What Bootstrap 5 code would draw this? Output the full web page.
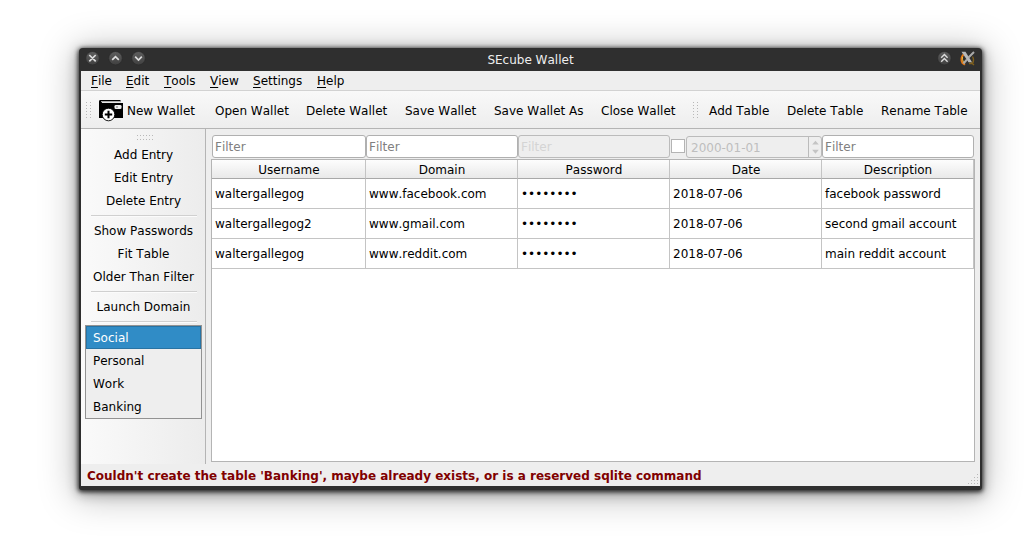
<!DOCTYPE html>
<html lang="en">
<head>
<meta charset="utf-8">
<title>SEcube Wallet</title>
<link rel="stylesheet" href="https://cdn.jsdelivr.net/npm/bootstrap@5.3.0/dist/css/bootstrap.min.css">
<style>
body{background:#fff;font:12px/16px "DejaVu Sans",sans-serif;font-kerning:none;color:#000;height:545px;overflow:hidden;padding:48px 0 0 79px}
.win{width:903px;height:442px;background:#2f2f2f;border-radius:4px 4px 3px 3px;padding:0 2px 4px;box-shadow:0 1px 4px 1px rgba(0,0,0,.75),0 3px 12px 2px rgba(0,0,0,.3),0 4px 36px 4px rgba(0,0,0,.26)}
.titlebar{height:23px;color:#eee;padding:0 5px}
.titlebar svg{display:block;margin-bottom:1px}
.titlebar .cap{padding-right:25px;flex:1;text-align:center}
.inner{height:415px;background:#eee}
.menus{height:20px;border-bottom:1px solid #d2d2d2;padding-left:10px}
.menus span{display:block;line-height:21px}
.menus u{text-underline-offset:2px;text-decoration-thickness:1px}
.tools{height:38px;border-bottom:1px solid #b4b4b4;background:linear-gradient(#f9f9f9,#ededed);line-height:40px;padding-left:4px}
.tools div{flex:none;white-space:nowrap}
.side{width:125px;border-right:1px solid #b4b4b4;background:linear-gradient(90deg,#fafafa,#ececec);padding:5px 3px 0 4px}
.side .act{height:23px;line-height:23px;text-align:center;white-space:nowrap}
.side hr{margin:2px 5px 3px 6px;height:2px;border:0;background:linear-gradient(#d0d0d0 50%,#fbfbfb 50%);opacity:1}
.side hr.last{margin-bottom:2px}
.tabs{border:1px solid #929292;background:#eee}
.tabs .it{height:23px;line-height:24px;padding-left:7px}
.tabs .it.sel{background:#308cc6;color:#fff;box-shadow:inset 0 0 0 1px #2873a3}
.main{padding:6px 5px 2px 5px}
.filters{height:24px;padding-left:1px}
.fl{height:23px;border:1px solid #b0b0b0;border-radius:3px;background:#fff;color:#808080;padding:0 2px;line-height:22px;flex:none}
.fl.off{background:#eee;color:#d4d4d4;border-color:#bbb}
.chk{width:14px;height:14px;border:1px solid #b4b4b4;background:#fff;margin:4px 1px 0;flex:none}
.spin{width:13px;border-left:1px solid #bbb;height:20px}
.view{height:303px;border:1px solid #b4b4b4;background:#fff}
.g{display:grid;grid-template-columns:154px 152px 152px 152px 152px}
.g>div{border-right:1px solid #c4c4c4;border-bottom:1px solid #c4c4c4;height:30px;line-height:30px;padding-left:3px;white-space:nowrap}
.g>.h{height:19px;line-height:20px;text-align:center;padding:0 0 0 1px;background:linear-gradient(#fdfdfd,#e9e9e9);border-bottom-color:#a8a8a8}
.status{height:22px;line-height:24px;padding-left:6px;color:#800000;font-weight:bold;font-kerning:normal}
</style>
<script src="https://cdn.jsdelivr.net/npm/bootstrap@5.3.0/dist/js/bootstrap.bundle.min.js"></script>
</head>
<body>
<svg width="0" height="0" class="position-absolute"><defs>
<linearGradient id="bt" x1="0" y1="0" x2="0" y2="1"><stop offset="0" stop-color="#5e5e5e"/><stop offset="1" stop-color="#404040"/></linearGradient>
<pattern id="dots" width="4" height="3" patternUnits="userSpaceOnUse"><rect width="1" height="1" fill="#b8b8b8"/></pattern>
<pattern id="dotsh" width="3" height="4" patternUnits="userSpaceOnUse"><rect width="1" height="1" fill="#b8b8b8"/></pattern>
</defs></svg>
<div class="win">
  <div class="titlebar d-flex align-items-center">
    <svg width="64" height="16" viewBox="0 0 64 16" fill="none" stroke="#dcdcdc" stroke-width="1.7">
      <g fill="url(#bt)" stroke="#262626" stroke-width=".6"><circle cx="6.5" cy="7.2" r="6.7"/><circle cx="29.5" cy="7.2" r="6.7"/><circle cx="52.5" cy="7.2" r="6.7"/></g>
      <path d="M3.300 4l6.400 6.400M9.700 4l-6.400 6.400M26.200 8.900l3.300-3.300 3.300 3.300M49.200 5.700l3.300 3.300 3.300-3.300"/>
    </svg>
    <div class="cap">SEcube Wallet</div>
    <svg width="39" height="16" viewBox="0 0 39 16" fill="none">
      <circle cx="8.4" cy="7.2" r="6.7" fill="url(#bt)" stroke="#262626" stroke-width=".6"/>
      <path d="M5.200 6.800l3.200-3.200 3.200 3.200M5.200 10.800l3.200-3.200 3.200 3.200" stroke="#dcdcdc" stroke-width="1.400"/>
      <path d="M27.500 3.500Q23.800 7.500 26.500 12L29 13.800" stroke="#e07818" stroke-width="1.900"/>
      <path d="M26.500 6Q25.700 8.500 28 11.800" stroke="#f3c23a" stroke-width=".9"/>
      <path d="M36.500 5.500Q38.500 9 36.500 12.500L33 12.500M35 11.500l3 2.500" stroke="#80601c" stroke-width="1.400"/>
      <path d="M25.500.8h4l6.500 10.500h-3.500z" fill="#b8b8b8"/>
      <path d="M38 1L32.500 6.500M31 8.500L27.500 12.500" stroke="#aaa" stroke-width="2"/>
    </svg>
  </div>
  <div class="inner">
    <div class="menus d-flex">
      <span style="width:35px"><u>F</u>ile</span><span style="width:38px"><u>E</u>dit</span><span style="width:46px"><u>T</u>ools</span><span style="width:43px"><u>V</u>iew</span><span style="width:64px"><u>S</u>ettings</span><span><u>H</u>elp</span>
    </div>
    <div class="tools d-flex">
      <svg width="14" height="37"><g transform="translate(1,11)"><rect width="5" height="17" fill="url(#dots)"/></g></svg>
      <svg width="28" height="37" viewBox="0 0 28 37">
        <path d="M1 9h20.500v2H3v1h21v15H0V10.500Q0 9 1 9z" fill="#000"/>
        <path d="M2 10h20v1.200H2z" fill="#aaa"/>
        <rect x="15.500" y="14" width="7" height="4" rx="1.300" fill="#eee"/><rect x="17" y="15" width="2" height="2" rx="1" fill="#999"/>
        <circle cx="9.500" cy="23.500" r="6.300" fill="#fff" stroke="#000" stroke-width=".9"/>
        <path d="M9.500 19.800v7.400M5.800 23.500h7.400" stroke="#000" stroke-width="2"/>
      </svg>
      <div style="width:88px">New Wallet</div><div style="width:91px">Open Wallet</div><div style="width:99px">Delete Wallet</div><div style="width:89px">Save Wallet</div><div style="width:107px">Save Wallet As</div><div style="width:91px">Close Wallet</div>
      <svg width="17" height="37"><g transform="translate(1,11)"><rect width="5" height="17" fill="url(#dots)"/></g></svg>
      <div style="width:78px">Add Table</div><div style="width:94px">Delete Table</div><div>Rename Table</div>
    </div>
    <div class="d-flex" style="height:335px">
      <div class="side">
        <svg width="17" height="9" class="d-block" style="margin:0 0 1px 52px"><g transform="translate(0,1)"><rect width="17" height="5" fill="url(#dotsh)"/></g></svg>
        <div class="act">Add Entry</div><div class="act">Edit Entry</div><div class="act">Delete Entry</div>
        <hr>
        <div class="act">Show Passwords</div><div class="act">Fit Table</div><div class="act">Older Than Filter</div>
        <hr>
        <div class="act">Launch Domain</div>
        <hr class="last">
        <div class="tabs"><div class="it sel">Social</div><div class="it">Personal</div><div class="it">Work</div><div class="it">Banking</div></div>
      </div>
      <div class="main flex-grow-1">
        <div class="filters d-flex">
          <div class="fl" style="width:154px">Filter</div><div class="fl" style="width:152px">Filter</div><div class="fl off" style="width:152px">Filter</div>
          <div class="chk"></div>
          <div class="fl off d-flex justify-content-between pe-0" style="width:136px;height:22px;margin-top:1px;color:#bebebe;padding-left:4px"><span>2000-01-01</span>
            <svg class="spin" viewBox="0 0 12 21" width="12" height="21"><path d="M3 8l3.500-4L10 8zM3 13.500h7l-3.500 4z" fill="#c4c4c4"/></svg></div>
          <div class="fl" style="width:152px">Filter</div>
        </div>
        <div class="view"><div class="g">
          <div class="h">Username</div><div class="h">Domain</div><div class="h">Password</div><div class="h">Date</div><div class="h">Description</div>
          <div>waltergallegog</div><div>www.facebook.com</div><div>••••••••</div><div>2018-07-06</div><div>facebook password</div>
          <div>waltergallegog2</div><div>www.gmail.com</div><div>••••••••</div><div>2018-07-06</div><div>second gmail account</div>
          <div>waltergallegog</div><div>www.reddit.com</div><div>••••••••</div><div>2018-07-06</div><div>main reddit account</div>
        </div></div>
      </div>
    </div>
    <div class="status d-flex justify-content-between"><span>Couldn't create the table 'Banking', maybe already exists, or is a reserved sqlite command</span>
      <svg width="13" height="22" fill="#b8b8b8"><path d="M10 10h1v1h-1zM7 13h1v1h-1zM10 13h1v1h-1zM4 16h1v1h-1zM7 16h1v1h-1zM10 16h1v1h-1zM1 19h1v1h-1zM4 19h1v1h-1zM7 19h1v1h-1zM10 19h1v1h-1z"/></svg></div>
  </div>
</div>
</body>
</html>
